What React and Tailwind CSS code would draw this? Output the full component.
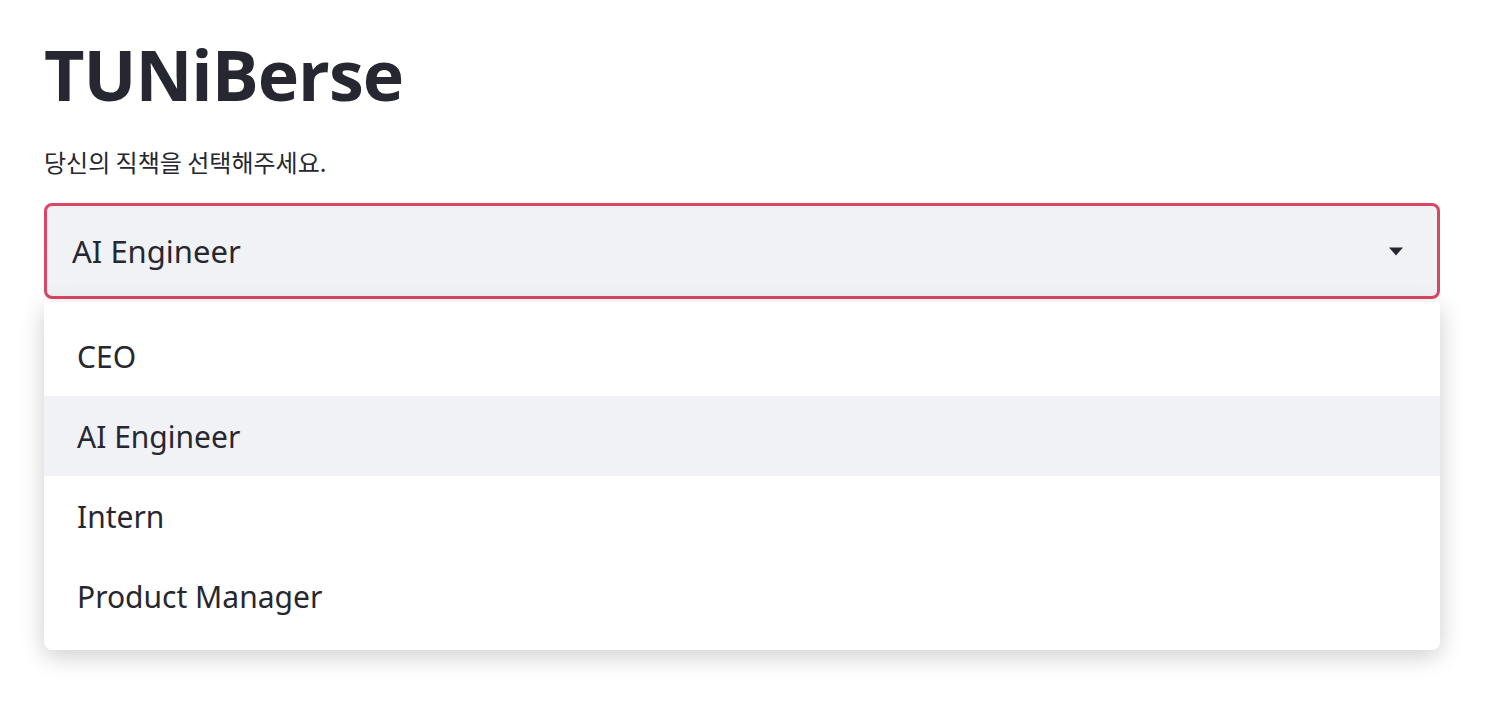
import React from 'react';

const options = ['CEO', 'AI Engineer', 'Intern', 'Product Manager'];

export default function App() {
  const selected = 'AI Engineer';

  return (
    <div className="min-h-[712px] w-full bg-white text-[#262730] font-['Noto_Sans','Noto_Sans_CJK_KR',sans-serif]">
      <div className="pl-[44px] pr-[54px] pt-[26px]">
        {/* Title */}
        <h1 className="text-[70px] font-bold leading-[96px] tracking-[-1px] font-['Open_Sans','Noto_Sans',sans-serif]">
          TUNiBerse
        </h1>

        {/* Label */}
        <div className="mt-[26px] text-[24px] leading-[28px] font-['Noto_Sans_CJK_KR',sans-serif]">
          당신의 직책을 선택해주세요.
        </div>

        {/* Select */}
        <div className="relative mt-[27px]">
          <div className="flex h-[96px] items-center justify-between rounded-[8px] border-[3px] border-[#dc4564] bg-[#f0f2f6] pl-[25px] pr-[33px]">
            <span className="text-[31px] text-[#262730]">{selected}</span>
            <svg width="16" height="9" viewBox="0 0 16 9">
              <path d="M1 0.5 L15 0.5 L8 8.5 Z" fill="#262730" />
            </svg>
          </div>

          {/* Dropdown menu */}
          <div className="absolute left-0 right-0 top-[99px] rounded-b-[8px] bg-white py-[14px] shadow-[0_6px_24px_rgba(0,0,0,0.2)]">
            {options.map((opt) => (
              <div
                key={opt}
                className={`flex h-[80px] items-center pl-[33px] text-[30px] ${
                  opt === selected ? 'bg-[#f0f2f6]' : ''
                }`}
              >
                {opt}
              </div>
            ))}
          </div>
        </div>
      </div>
    </div>
  );
}
